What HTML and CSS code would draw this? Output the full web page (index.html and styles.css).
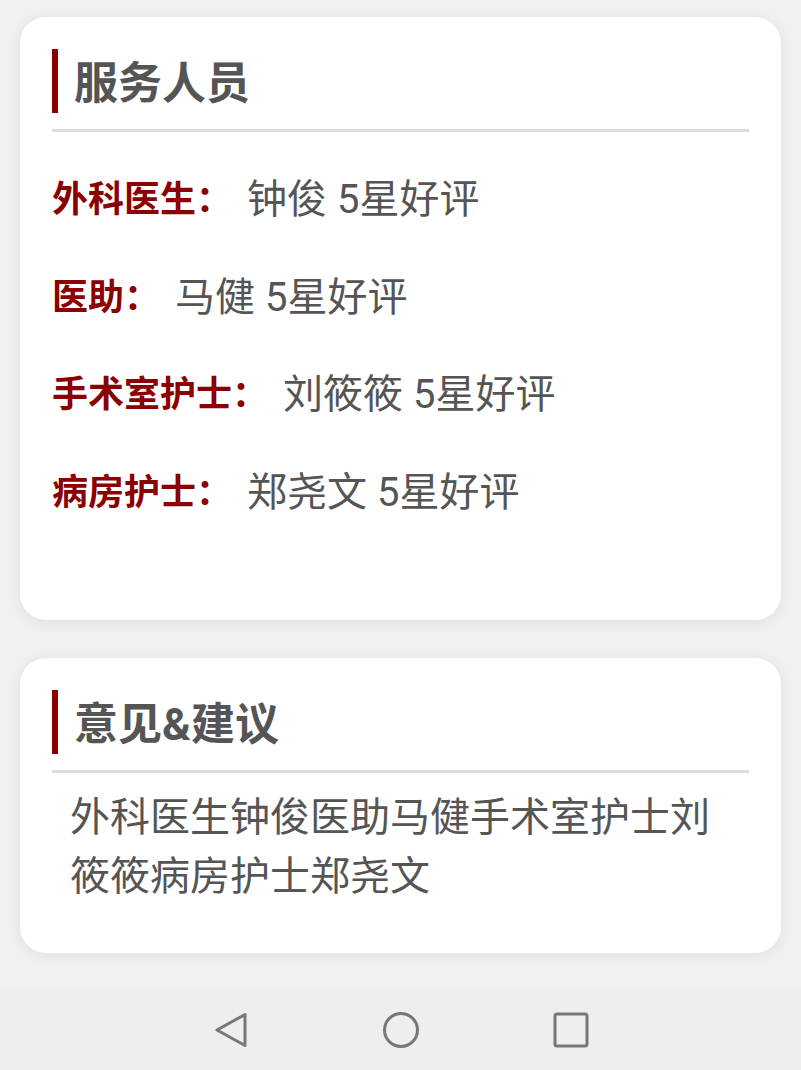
FILE: index.html
```html
<!DOCTYPE html>
<html lang="zh-CN">
<head>
    <meta charset="UTF-8">
    <meta name="viewport" content="width=device-width, initial-scale=1.0">
    <title>服务评价</title>
    <link rel="stylesheet" href="styles.css">
</head>
<body>
    <div class="page">
        <div class="content">
            <div class="card staff-card">
                <div class="card-title"><span>服务人员</span></div>
                <div class="staff-list">
                    <div class="staff-row">
                        <span class="staff-label">外科医生：</span>
                        <span class="staff-value">钟俊 5星好评</span>
                    </div>
                    <div class="staff-row">
                        <span class="staff-label">医助：</span>
                        <span class="staff-value">马健 5星好评</span>
                    </div>
                    <div class="staff-row">
                        <span class="staff-label">手术室护士：</span>
                        <span class="staff-value">刘筱筱 5星好评</span>
                    </div>
                    <div class="staff-row">
                        <span class="staff-label">病房护士：</span>
                        <span class="staff-value">郑尧文 5星好评</span>
                    </div>
                </div>
            </div>
            <div class="card advice-card">
                <div class="card-title"><span>意见&amp;建议</span></div>
                <p class="advice-text">外科医生钟俊医助马健手术室护士刘筱筱病房护士郑尧文</p>
            </div>
        </div>
        <!-- system navigation bar -->
        <div class="nav-bar">
            <svg class="nav-icon" width="40" height="40" viewBox="0 0 40 40">
                <path d="M34 4.5 L34 35.5 L6 20 Z" fill="none" stroke="#777" stroke-width="3" stroke-linejoin="round"/>
            </svg>
            <svg class="nav-icon" width="40" height="40" viewBox="0 0 40 40">
                <circle cx="20" cy="20" r="16.5" fill="none" stroke="#777" stroke-width="3"/>
            </svg>
            <svg class="nav-icon" width="40" height="40" viewBox="0 0 40 40">
                <rect x="4" y="4" width="32" height="32" rx="2" fill="none" stroke="#777" stroke-width="3"/>
            </svg>
        </div>
    </div>
</body>
</html>
```

FILE: styles.css
```css
body {
    margin: 0;
    background: #f0f0f0;
    font-family: Roboto, "Noto Sans CJK SC", sans-serif;
}
.page {
    display: flex;
    flex-direction: column;
    height: 1070px;
}
.content {
    flex: 1;
    padding: 17px 20px 0;
    display: flex;
    flex-direction: column;
    gap: 38px;
}
.card {
    background: #fff;
    border-radius: 26px;
    box-shadow: 0 2px 14px rgba(0, 0, 0, 0.07);
    padding: 32px 32px 0;
    box-sizing: border-box;
}
.staff-card {
    height: 603px;
}
.advice-card {
    height: 295px;
}
.card-title {
    display: flex;
    align-items: center;
    height: 64px;
    margin-bottom: 16px;
    border-left: 6px solid #8b0000;
    padding-left: 16px;
    font-size: 44px;
    font-weight: bold;
    color: #555;
    line-height: 64px;
}
.card-title span {
    padding-top: 6px;
}
.staff-list,
.advice-text {
    border-top: 3px solid #ddd;
}
.staff-list {
    padding-top: 15px;
}
.staff-row {
    display: flex;
    align-items: center;
    height: 97.7px;
}
.staff-label {
    font-size: 36px;
    font-weight: bold;
    color: #8b0000;
    margin-right: 15px;
}
.staff-value {
    font-size: 40px;
    color: #555;
}
.advice-text {
    margin: 0;
    padding: 15px 16px 0 18px;
    font-size: 40px;
    line-height: 59px;
    color: #555;
}
.nav-bar {
    height: 80px;
    background: #eeeeee;
    display: flex;
    justify-content: center;
    align-items: center;
    gap: 130px;
}
.nav-icon {
    display: block;
}
```
